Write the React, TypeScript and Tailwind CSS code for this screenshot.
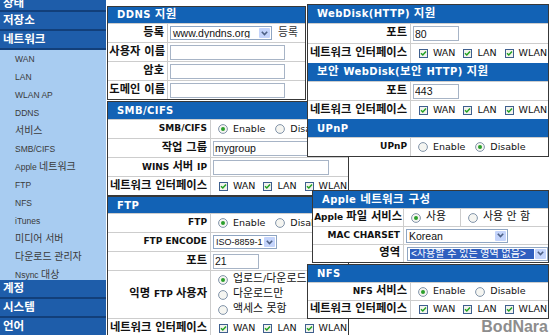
import type { ReactNode } from 'react'

// hangul runs get their own size, the latin text around them stays small
const Txt = ({ s, k = 'text-[1.25em]' }: { s: string; k?: string }) => (
  <span>
    {s.split(/([가-힣][가-힣 ]*)/).map((p, i) =>
      i % 2 ? (
        <span key={i} className={k}>
          {p}
        </span>
      ) : (
        p
      ),
    )}
  </span>
)

const Check = () => (
  <svg width="9" height="9" viewBox="0 0 9 9" className="shrink-0">
    <rect x="0.5" y="0.5" width="8" height="8" fill="#f3f3ee" stroke="#3e5f8e" />
    <path d="M2 4.2 L3.8 6 L7 2.6" fill="none" stroke="#21a121" strokeWidth="1.5" />
  </svg>
)

const Radio = ({ on }: { on?: boolean }) => (
  <svg width="10" height="10" viewBox="0 0 10 10" className="shrink-0">
    <circle cx="5" cy="5" r="4.4" fill="#f5f5f1" stroke="#8193a9" />
    {on && <circle cx="5" cy="5" r="2" fill="#2b9f2b" />}
  </svg>
)

const Sel = ({
  v,
  className = '',
  hl = false,
  size = 'text-[10.5px]',
}: {
  v: string
  className?: string
  hl?: boolean
  size?: string
}) => (
  <div className={`flex h-[14px] shrink-0 items-stretch border border-[#8ea5c2] bg-white p-[1px] ${className}`}>
    <div
      className={`flex flex-1 items-center overflow-hidden whitespace-nowrap pl-[1px] font-['Liberation_Sans','Noto_Sans_CJK_KR',sans-serif] ${size} leading-[10px]`}
    >
      {hl ? (
        <span className="flex h-full flex-1 items-center bg-[#2f5fbf] px-[1px] text-white">{v}</span>
      ) : (
        v
      )}
    </div>
    <div className="ml-[1px] flex w-[11px] items-center justify-center rounded-[1px] bg-[#c4d4fb]">
      <svg width="7" height="5" viewBox="0 0 7 5">
        <path d="M0.8 0.8 L3.5 3.6 L6.2 0.8" fill="none" stroke="#4d6185" strokeWidth="1.6" />
      </svg>
    </div>
  </div>
)

const Inp = ({ v = '', className = '' }: { v?: string; className?: string }) => (
  <input
    readOnly
    value={v}
    className={`h-[15px] shrink-0 border border-[#a7b4c6] bg-white px-[1px] font-['Liberation_Sans',sans-serif] text-[10.5px] leading-[13px] outline-none ${className}`}
  />
)

const Nets = () => (
  <div className="ml-[8px] flex items-center gap-[8px] whitespace-nowrap">
    {['WAN', 'LAN', 'WLAN'].map((n) => (
      <span key={n} className="flex items-center gap-[5px]">
        <Check />
        {n}
      </span>
    ))}
  </div>
)

const Radios = ({ items, on }: { items: string[]; on: number }) => (
  <div className="ml-[7px] flex items-center gap-[10px] whitespace-nowrap">
    {items.map((n, i) => (
      <span key={n} className="flex items-center gap-[5px]">
        <Radio on={i === on} />
        <Txt s={n} k="text-[1.15em]" />
      </span>
    ))}
  </div>
)

const Title = ({ t, h = 'h-[17px]' }: { t: string; h?: string }) => (
  <div
    className={`${h} flex items-center bg-[#1262b5] pl-[9px] text-[10px] font-bold tracking-[0.4px] whitespace-nowrap text-white`}
  >
    <Txt s={t} k="text-[1.15em]" />
  </div>
)

const Row = ({
  label,
  w,
  h = 'h-[19px]',
  pr = 'pr-[3px]',
  children,
}: {
  label: string
  w: string
  h?: string
  pr?: string
  children?: ReactNode
}) => (
  <div className={`flex border-t border-[#cdcdcd] ${h}`}>
    <div
      className={`${w} ${pr} flex shrink-0 items-center justify-end border-r border-[#cdcdcd] text-[9px] font-bold whitespace-nowrap`}
    >
      <Txt s={label} />
    </div>
    <div className="flex min-w-0 flex-1 items-center text-[9.5px]">{children}</div>
  </div>
)

const Panel = ({ className, children }: { className: string; children: ReactNode }) => (
  <div className={`absolute overflow-hidden border border-[#383838] bg-white ${className}`}>{children}</div>
)

const menu = [
  'WAN',
  'LAN',
  'WLAN AP',
  'DDNS',
  '서비스',
  'SMB/CIFS',
  'Apple 네트워크',
  'FTP',
  'NFS',
  'iTunes',
  '미디어 서버',
  '다운로드 관리자',
  'Nsync 대상',
]

const SideHead = ({ t, className }: { t: string; className: string }) => (
  <div
    className={`${className} flex items-center border-b-2 border-[#123f7a] bg-[#1e5daa] pl-[3px] text-[11.5px] font-bold text-white`}
  >
    {t}
  </div>
)

const Sidebar = () => (
  <div className="flex h-full w-[106px] flex-col bg-[#a8ccf1] font-['Liberation_Sans','Noto_Sans_CJK_KR',sans-serif]">
    <SideHead t="상태" className="-mt-[9px] h-[21px] pt-[6px]" />
    <SideHead t="저장소" className="h-[21px]" />
    <SideHead t="네트워크" className="h-[19px]" />
    <div className="h-[230px] shrink-0">
      {menu.map((m) => (
        <div key={m} className="flex h-[18px] items-center pl-[15px] text-[8.5px] whitespace-nowrap text-[#3a3a3a]">
          <Txt s={m} k="text-[1.17em]" />
        </div>
      ))}
    </div>
    <SideHead t="계정" className="h-[19px] shrink-0" />
    <SideHead t="시스템" className="h-[19px] shrink-0" />
    <SideHead t="언어" className="h-[19px] shrink-0" />
  </div>
)

export default function App() {
  return (
    <div className="relative h-[335px] w-[550px] overflow-hidden bg-white font-['DejaVu_Sans','Noto_Sans_CJK_KR',sans-serif] text-[#111]">
      <Sidebar />

      {/* DDNS */}
      <Panel className="left-[107px] top-[6px] w-[199px]">
        <Title t="DDNS 지원" h="h-[16px]" />
        <Row label="등록" w="w-[60px]">
          <Sel v="www.dyndns.org" className="ml-[2px] w-[102px]" />
          <span className="ml-[6px] text-[9px] text-[#333]">
            <Txt s="등록" k="text-[1.2em]" />
          </span>
        </Row>
        <Row label="사용자 이름" w="w-[60px]" pr="pr-[2px]">
          <Inp className="ml-[2px] w-[115px]" />
        </Row>
        <Row label="암호" w="w-[60px]">
          <Inp className="ml-[2px] w-[115px]" />
        </Row>
        <Row label="도메인 이름" w="w-[60px]" pr="pr-[2px]">
          <Inp className="ml-[2px] w-[115px]" />
        </Row>
      </Panel>

      {/* SMB/CIFS */}
      <Panel className="left-[107px] top-[101px] w-[242px]">
        <Title t="SMB/CIFS" />
        <Row label="SMB/CIFS" w="w-[103px]">
          <Radios items={['Enable', 'Disable']} on={0} />
        </Row>
        <Row label="작업 그룹" w="w-[103px]">
          <Inp v="mygroup" className="ml-[2px] w-[116px]" />
        </Row>
        <Row label="WINS 서버 IP" w="w-[103px]">
          <Inp className="ml-[2px] w-[116px]" />
        </Row>
        <Row label="네트워크 인터페이스" w="w-[103px]">
          <Nets />
        </Row>
      </Panel>

      {/* FTP */}
      <Panel className="left-[107px] top-[196px] w-[242px]">
        <Title t="FTP" h="h-[16px]" />
        <Row label="FTP" w="w-[103px]">
          <Radios items={['Enable', 'Disable']} on={0} />
        </Row>
        <Row label="FTP ENCODE" w="w-[103px]">
          <Sel v="ISO-8859-1" size="text-[9px]" className="ml-[2px] w-[64px]" />
        </Row>
        <Row label="포트" w="w-[103px]">
          <Inp v="21" className="ml-[2px] w-[46px]" />
        </Row>
        <Row label="익명 FTP 사용자" w="w-[103px]" h="h-[48px]">
          <div className="ml-[7px] flex flex-col whitespace-nowrap">
            {['업로드/다운로드', '다운로드만', '액세스 못함'].map((n, i) => (
              <span key={n} className="flex h-[15px] items-center gap-[5px]">
                <Radio on={i === 0} />
                <Txt s={n} k="text-[1.15em]" />
              </span>
            ))}
          </div>
        </Row>
        <Row label="네트워크 인터페이스" w="w-[103px]">
          <Nets />
        </Row>
      </Panel>

      {/* WebDisk + UPnP */}
      <Panel className="left-[307px] top-[4px] w-[242px]">
        <Title t="WebDisk(HTTP) 지원" h="h-[18px]" />
        <Row label="포트" w="w-[103px]" h="h-[20px]">
          <Inp v="80" className="ml-[2px] w-[46px]" />
        </Row>
        <Row label="네트워크 인터페이스" w="w-[103px]" h="h-[20px]">
          <Nets />
        </Row>
        <Title t="보안 WebDisk(보안 HTTP) 지원" h="h-[18px]" />
        <Row label="포트" w="w-[103px]">
          <Inp v="443" className="ml-[2px] w-[46px]" />
        </Row>
        <Row label="네트워크 인터페이스" w="w-[103px]">
          <Nets />
        </Row>
        <Title t="UPnP" h="h-[18px]" />
        <Row label="UPnP" w="w-[103px]">
          <Radios items={['Enable', 'Disable']} on={1} />
        </Row>
      </Panel>

      {/* Apple */}
      <Panel className="left-[312px] top-[190px] w-[237px]">
        <Title t="Apple 네트워크 구성" />
        <Row label="Apple 파일 서비스" w="w-[91px]" h="h-[18px]" pr="pr-[1px]">
          <div className="flex h-full w-[57px] items-center border-r border-[#cdcdcd]">
            <Radios items={['사용']} on={0} />
          </div>
          <Radios items={['사용 안 함']} on={-1} />
        </Row>
        <Row label="MAC CHARSET" w="w-[91px]" h="h-[18px]">
          <Sel v="Korean" className="ml-[2px] w-[102px]" />
        </Row>
        <Row label="영역" w="w-[91px]" h="h-[18px]">
          <Sel v="<사용할 수 있는 영역 없음>" hl size="text-[10px]" className="ml-[3px] w-[141px]" />
        </Row>
      </Panel>

      {/* NFS */}
      <Panel className="left-[307px] top-[264px] w-[242px]">
        <Title t="NFS" />
        <Row label="NFS 서비스" w="w-[103px]" h="h-[18px]">
          <Radios items={['Enable', 'Disable']} on={0} />
        </Row>
        <Row label="네트워크 인터페이스" w="w-[103px]" h="h-[18px]">
          <Nets />
        </Row>
      </Panel>

      <div className="absolute bottom-[0px] right-[2px] font-['Liberation_Sans',sans-serif] text-[16px] leading-[16px] font-bold text-[#8d8d8d]">
        BodNara
      </div>
    </div>
  )
}
